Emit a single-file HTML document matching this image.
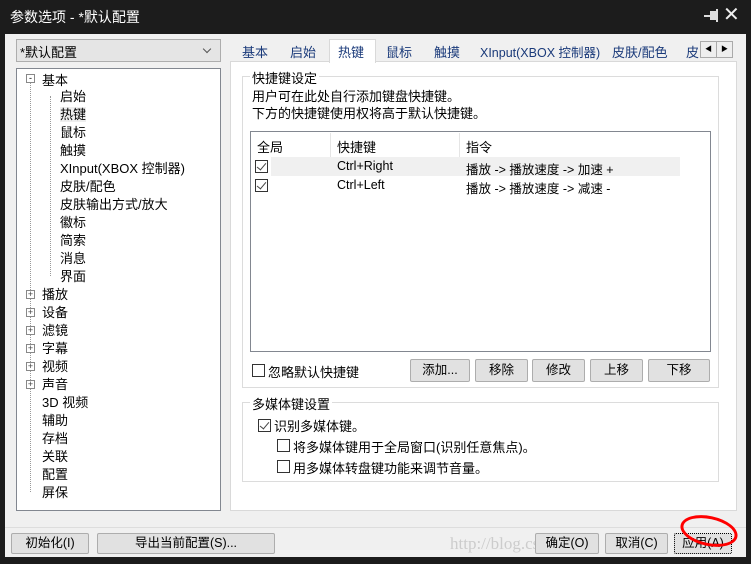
<!DOCTYPE html>
<html><head><meta charset="utf-8"><style>
*{margin:0;padding:0;box-sizing:border-box}
body{width:751px;height:564px;background:#1c1c1c;position:relative;overflow:hidden;font-family:"Liberation Sans","Noto Sans CJK SC",sans-serif;font-size:12.5px;color:#000}
.a{position:absolute;white-space:nowrap}
.btn{position:absolute;border:1px solid #adadad;background:#e1e1e1;text-align:center;border-radius:2px;line-height:20px}
.cb{position:absolute;width:13px;height:13px;border:1px solid #333;background:#fff}
.ck::after{content:"";position:absolute;left:3px;top:0px;width:4px;height:8px;border:solid #444;border-width:0 1.5px 1.5px 0;transform:rotate(40deg)}
.gb{position:absolute;border:1px solid #dcdcdc}
.pm{width:9px;height:9px;border:1px solid #888;background:#fff;line-height:7px;text-align:center;margin-bottom:9px}
</style></head><body>
<div class="a" style="left:10px;top:7px;color:#fff;font-size:14px">参数选项 - *默认配置</div>
<div class="a" style="left:704px;top:15px;width:6px;height:2px;background:#ddd"></div>
<div class="a" style="left:710px;top:11px;width:6px;height:9px;background:#ddd"></div>
<div class="a" style="left:716px;top:9px;width:2px;height:13px;background:#ddd"></div>
<div class="a" style="left:723px;top:2px;color:#eee;font-size:20px">✕</div>
<div class="a" style="left:5px;top:34px;width:741px;height:523px;background:#f0f0f0"></div>
<!-- combo -->
<div class="a" style="left:16px;top:39px;width:205px;height:23px;background:#e5e5e5;border:1px solid #adadad"></div>
<div class="a" style="left:20px;top:42px;font-size:13px">*默认配置</div>
<div class="a" style="left:204px;top:46px;width:6px;height:6px;border:solid #555;border-width:0 1px 1px 0;transform:rotate(45deg)"></div>
<!-- tree -->
<div class="a" style="left:16px;top:68px;width:205px;height:443px;background:#fff;border:1px solid #828790"></div>
<div class="a" style="left:30px;top:82px;height:410px;border-left:1px dotted #999"></div>
<div class="a" style="left:50px;top:96px;height:180px;border-left:1px dotted #999"></div>
<div class="a" style="left:26px;top:74px;width:9px;height:9px;border:1px solid #888;background:#fff;font-size:9px;line-height:6px;text-align:center">-</div>
<div class="a" style="left:42px;top:70px;font-size:13px">基本</div>
<div class="a" style="left:60px;top:88px;font-size:13px;line-height:18px">启始<br><span style="background:#eee">热键</span><br>鼠标<br>触摸<br>XInput(XBOX 控制器)<br>皮肤/配色<br>皮肤输出方式/放大<br>徽标<br>简索<br>消息<br>界面</div>
<div class="a" style="left:42px;top:286px;font-size:13px;line-height:18px">播放<br>设备<br>滤镜<br>字幕<br>视频<br>声音<br>3D 视频<br>辅助<br>存档<br>关联<br>配置<br>屏保</div>
<div class="a" style="left:26px;top:290px;font-size:9px;line-height:18px;color:#444">
<div class="pm">+</div><div class="pm">+</div><div class="pm">+</div><div class="pm">+</div><div class="pm">+</div><div class="pm">+</div></div>
<!-- tabs -->
<div class="a" style="left:230px;top:61px;width:507px;height:450px;background:#fff;border:1px solid #d9d9d9"></div>
<div class="a" style="left:329px;top:39px;width:47px;height:24px;background:#fff;border:1px solid #d9d9d9;border-bottom:none"></div>
<div class="a" style="left:242px;top:42px;font-size:13px;color:#1a3a7a">基本</div>
<div class="a" style="left:290px;top:42px;font-size:13px;color:#1a3a7a">启始</div>
<div class="a" style="left:338px;top:42px;font-size:13px;color:#1a3a7a">热键</div>
<div class="a" style="left:386px;top:42px;font-size:13px;color:#1a3a7a">鼠标</div>
<div class="a" style="left:434px;top:42px;font-size:13px;color:#1a3a7a">触摸</div>
<div class="a" style="left:480px;top:42px;font-size:12.5px;color:#1a3a7a">XInput(XBOX 控制器)</div>
<div class="a" style="left:612px;top:42px;font-size:13px;color:#1a3a7a">皮肤/配色</div>
<div class="a" style="left:686px;top:42px;font-size:13px;color:#1a3a7a;width:14px;overflow:hidden">皮</div>
<div class="a" style="left:700px;top:41px;width:17px;height:17px;border:1px solid #aaa;background:#eee;font-size:7px;text-align:center;line-height:15px">◀</div>
<div class="a" style="left:716px;top:41px;width:17px;height:17px;border:1px solid #aaa;background:#eee;font-size:7px;text-align:center;line-height:15px">▶</div>
<!-- group 1 -->
<div class="gb" style="left:242px;top:76px;width:477px;height:312px"></div>
<div class="a" style="left:250px;top:68px;background:#fff;padding:0 2px;font-size:13px">快捷键设定</div>
<div class="a" style="left:252px;top:88px;font-size:13px;line-height:17px">用户可在此处自行添加键盘快捷键。<br>下方的快捷键使用权将高于默认快捷键。</div>
<div class="a" style="left:250px;top:131px;width:461px;height:221px;border:1px solid #828790;background:#fff"></div>
<div class="a" style="left:330px;top:133px;height:24px;border-left:1px solid #e5e5e5"></div>
<div class="a" style="left:459px;top:133px;height:24px;border-left:1px solid #e5e5e5"></div>
<div class="a" style="left:257px;top:137px;font-size:13px">全局</div>
<div class="a" style="left:337px;top:137px;font-size:13px">快捷键</div>
<div class="a" style="left:466px;top:137px;font-size:13px">指令</div>
<div class="a" style="left:271px;top:157px;width:409px;height:19px;background:#f0f0f0"></div>
<div class="cb ck" style="left:255px;top:160px"></div>
<div class="cb ck" style="left:255px;top:179px"></div>
<div class="a" style="left:337px;top:159px">Ctrl+Right</div>
<div class="a" style="left:466px;top:159px">播放 -&gt; 播放速度 -&gt; 加速 +</div>
<div class="a" style="left:337px;top:178px">Ctrl+Left</div>
<div class="a" style="left:466px;top:178px">播放 -&gt; 播放速度 -&gt; 减速 -</div>
<div class="cb" style="left:252px;top:364px"></div>
<div class="a" style="left:268px;top:362px;font-size:13px">忽略默认快捷键</div>
<div class="btn" style="left:410px;top:359px;width:60px;height:23px">添加...</div>
<div class="btn" style="left:475px;top:359px;width:53px;height:23px">移除</div>
<div class="btn" style="left:532px;top:359px;width:53px;height:23px">修改</div>
<div class="btn" style="left:590px;top:359px;width:53px;height:23px">上移</div>
<div class="btn" style="left:648px;top:359px;width:62px;height:23px">下移</div>
<!-- group 2 -->
<div class="gb" style="left:242px;top:402px;width:477px;height:80px"></div>
<div class="a" style="left:250px;top:394px;background:#fff;padding:0 2px;font-size:13px">多媒体键设置</div>
<div class="cb ck" style="left:258px;top:419px"></div>
<div class="a" style="left:274px;top:416px;font-size:13px">识别多媒体键。</div>
<div class="cb" style="left:277px;top:439px"></div>
<div class="a" style="left:293px;top:437px;font-size:13px">将多媒体键用于全局窗口(识别任意焦点)。</div>
<div class="cb" style="left:277px;top:460px"></div>
<div class="a" style="left:293px;top:458px;font-size:13px">用多媒体转盘键功能来调节音量。</div>
<!-- bottom -->
<div class="a" style="left:5px;top:527px;width:741px;border-top:1px solid #ddd"></div>
<div class="btn" style="left:11px;top:533px;width:78px;height:21px;line-height:19px">初始化(I)</div>
<div class="btn" style="left:97px;top:533px;width:178px;height:21px;line-height:19px">导出当前配置(S)...</div>
<div class="a" style="left:450px;top:534px;font-family:'Liberation Serif',serif;font-size:17px;color:#ccc">http://blog.csdn.net/</div>
<div class="btn" style="left:535px;top:533px;width:64px;height:21px;line-height:19px">确定(O)</div>
<div class="btn" style="left:605px;top:533px;width:63px;height:21px;line-height:19px">取消(C)</div>
<div class="btn" style="left:674px;top:533px;width:58px;height:21px;line-height:19px;border:1px dotted #000">应用(A)</div>
<div class="a" style="left:680px;top:516px;width:58px;height:30px;border:3px solid #f00;border-radius:50%;transform:rotate(12deg)"></div>
</body></html>
